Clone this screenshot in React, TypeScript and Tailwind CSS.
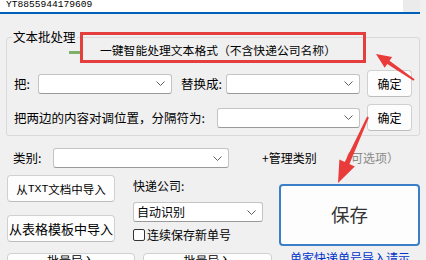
import React from 'react'

const font = "font-['Noto_Sans_CJK_SC','Liberation_Sans',sans-serif]"

function Chevron() {
  return (
    <svg width="9" height="5" viewBox="0 0 9 5" className="shrink-0">
      <path d="M0.5 0.5 L4.5 4.5 L8.5 0.5" fill="none" stroke="#606060" strokeWidth="1" />
    </svg>
  )
}

function Combo({ className, text }: { className: string; text?: string }) {
  return (
    <div
      className={`flex items-center justify-between bg-white border border-[#c4c4c4] border-b-[#9a9a9a] rounded-[3px] pl-[3px] pr-[6px] ${className}`}
    >
      <span className="text-[12px] leading-[16px] text-black">{text}</span>
      <Chevron />
    </div>
  )
}

function Btn({ className, children }: { className: string; children: React.ReactNode }) {
  return (
    <div
      className={`flex items-center justify-center whitespace-nowrap bg-[#fdfdfd] border border-[#d0d0d0] border-b-[#bdbdbd] rounded-[4px] text-black ${className}`}
    >
      {children}
    </div>
  )
}

// polygon for a tapered annotation arrow
function arrow(x1: number, y1: number, x2: number, y2: number, tailW: number, shaftW: number, headL: number, headW: number) {
  const L = Math.hypot(x2 - x1, y2 - y1)
  const ux = (x2 - x1) / L
  const uy = (y2 - y1) / L
  const nx = -uy
  const ny = ux
  const bx = x2 - ux * headL
  const by = y2 - uy * headL
  const pts = [
    [x1 + (nx * tailW) / 2, y1 + (ny * tailW) / 2],
    [bx + (nx * shaftW) / 2, by + (ny * shaftW) / 2],
    [bx + (nx * headW) / 2, by + (ny * headW) / 2],
    [x2, y2],
    [bx - (nx * headW) / 2, by - (ny * headW) / 2],
    [bx - (nx * shaftW) / 2, by - (ny * shaftW) / 2],
    [x1 - (nx * tailW) / 2, y1 - (ny * tailW) / 2],
  ]
  return pts.map((p) => p.map((v) => v.toFixed(1)).join(',')).join(' ')
}

export default function App() {
  return (
    <div className={`relative w-[426px] h-[260px] overflow-hidden bg-[#f0f0f0] ${font}`}>
      {/* tracking number box */}
      <div className="flex w-[420px] h-[14px] border-b-2 border-[#005fb8]">
        <div className="flex-1 bg-white pl-[6px] font-['Liberation_Mono',monospace] text-[9.6px] leading-[10px] text-black">
          YT8855944179609
        </div>
        <div className="w-[17px] bg-[#ebebeb]" />
      </div>

      {/* 文本批处理 */}
      <fieldset className="mt-[16px] ml-[6px] w-[414px] border border-[#d9d9d9] rounded-[3px] pb-[4px]">
        <legend className="ml-[5px] px-[1px] text-[12.5px] leading-[14px] text-black">文本批处理</legend>

        <div className="h-[12px] pl-[93px] text-[11.8px] leading-[12px] text-black whitespace-nowrap">
          一键智能处理文本格式（不含快递公司名称）
        </div>

        <div className="flex items-center h-[27px] mt-[14px] pl-[7px]">
          <span className="w-[24px] text-[12.5px] leading-[16px] text-black">把:</span>
          <Combo className="w-[134px] h-[20px]" />
          <span className="ml-[9px] w-[45px] text-[12.5px] leading-[16px] text-black whitespace-nowrap">替换成:</span>
          <Combo className="w-[134px] h-[20px]" />
          <Btn className="ml-[7px] w-[45px] h-[27px] text-[12px]">确定</Btn>
        </div>

        <div className="flex items-center h-[27px] mt-[7px] pl-[7px]">
          <span className="w-[203px] text-[12.5px] leading-[16px] text-black whitespace-nowrap">把两边的内容对调位置，分隔符为:</span>
          <Combo className="w-[143px] h-[20px]" />
          <Btn className="ml-[7px] w-[45px] h-[27px] text-[12px]">确定</Btn>
        </div>
      </fieldset>

      {/* 类别 */}
      <div className="flex items-center h-[20px] mt-[12px] pl-[13px]">
        <span className="w-[40px] text-[12.5px] leading-[16px] text-black">类别:</span>
        <Combo className="w-[176px] h-[20px]" />
        <span className="ml-[33px] w-[77px] text-[12px] leading-[16px] text-black">+管理类别</span>
        <span className="text-[12px] leading-[16px] text-[#8a8a8a]">（可选项）</span>
      </div>

      {/* import / save */}
      <div className="flex mt-[7px] pl-[7px]">
        <div className="w-[265px]">
          <div className="flex">
            <div className="flex flex-col gap-[13px] w-[108px]">
              <Btn className="h-[27px] text-[11.5px] leading-[16px]">
                从<span className="font-['Liberation_Mono',monospace] text-[11.5px]">TXT</span>文档中导入
              </Btn>
              <Btn className="h-[27px] text-[13px] leading-[16px]">从表格模板中导入</Btn>
            </div>
            <div className="flex flex-col ml-[18px] w-[130px]">
              <span className="h-[22px] text-[12px] leading-[22px] text-black">快递公司:</span>
              <Combo className="mt-[5px] h-[20px]" text="自动识别" />
              <label className="flex items-center h-[15px] mt-[5px]">
                <span className="w-[12px] h-[12px] bg-white border border-[#333333] rounded-[2px]" />
                <span className="ml-[2px] text-[12px] leading-[15px] text-black whitespace-nowrap">连续保存新单号</span>
              </label>
            </div>
          </div>
          <div className="flex gap-[8px] mt-[11px]">
            <div className="flex justify-center w-[128px] h-[27px] bg-[#fdfdfd] border border-[#d0d0d0] rounded-[4px] text-[12px] leading-[14px] text-black">
              批量导入
            </div>
            <div className="flex justify-center w-[129px] h-[27px] bg-[#fdfdfd] border border-[#d0d0d0] rounded-[4px] text-[12px] leading-[14px] text-black">
              批量导入
            </div>
          </div>
        </div>

        <div className="ml-[7px] w-[141px]">
          <div className="flex items-center justify-center mt-[9px] h-[62px] bg-[#fdfdfd] border-2 border-[#3a7fc8] rounded-[4px] text-[18.5px] text-[#333333]">
            保存
          </div>
          <div className="mt-[5px] pl-[11px] text-[12px] leading-[14px] text-[#0033cc] whitespace-nowrap">单家快递单号导入请示</div>
        </div>
      </div>

      {/* annotations */}
      <svg className="absolute left-0 top-0 pointer-events-none" width="426" height="260" viewBox="0 0 426 260">
        <rect x="69" y="51" width="12" height="3" fill="#7fb06a" />
        <rect x="81.5" y="33.5" width="283" height="28" fill="none" stroke="#e53e3e" strokeWidth="3" />
        <polygon points={arrow(414, 80, 376, 54, 2, 4, 15, 13)} fill="#ea3b3b" />
        <polygon points={arrow(368, 117, 338, 183, 2, 5, 22, 17)} fill="#ea3b3b" />
      </svg>
    </div>
  )
}
